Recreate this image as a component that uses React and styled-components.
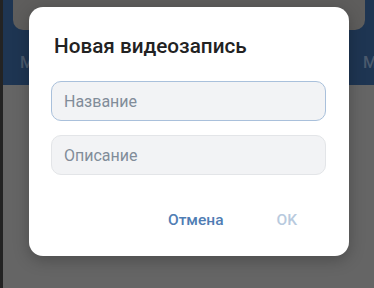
import React from "react";
import styled, { createGlobalStyle } from "styled-components";

const Global = createGlobalStyle`
  html, body { margin: 0; padding: 0; }
  body { width: 374px; height: 288px; overflow: hidden; background: #656565; font-family: Roboto, "Noto Sans", sans-serif; }
  #root { width: 374px; height: 288px; }
`;

const Page = styled.div`
  position: relative;
  width: 374px;
  height: 288px;
  display: flex;
  overflow: hidden;
  background: #656565;
`;

const EdgeStrip = styled.div`
  width: 3px;
  background: #232323;
`;

const Main = styled.div`
  flex: 1;
  display: flex;
  flex-direction: column;
`;

const Header = styled.div`
  height: 85px;
  background: #1e3552;
  display: flex;
  flex-direction: column;
  padding: 0 9px 0 10px;
  box-sizing: border-box;
`;

const SearchBox = styled.div`
  height: 30px;
  margin-top: -10px;
  padding-top: 10px;
  box-sizing: content-box;
  border-radius: 0 0 10px 10px;
  background: #5e5d5c;
`;

const Tabs = styled.div`
  display: flex;
  justify-content: space-between;
  padding: 23px 0 0 7px;
  margin-right: -12px;
`;

const Tab = styled.span`
  font-size: 16px;
  font-weight: 500;
  color: #4b5a6d;
`;

const Content = styled.div`
  flex: 1;
  background: #656565;
`;

const Dialog = styled.div`
  position: absolute;
  left: 29px;
  top: 7px;
  width: 320px;
  height: 249px;
  background: #fff;
  border-radius: 14px;
  box-shadow: 0 4px 16px rgba(0, 0, 0, 0.25);
  box-sizing: border-box;
  padding: 27px 23px 0 22px;
  display: flex;
  flex-direction: column;
`;

const Title = styled.h2`
  margin: 0 0 0 3px;
  font-size: 20.7px;
  line-height: 24px;
  font-weight: 500;
  color: #222;
`;

const Fields = styled.div`
  display: flex;
  flex-direction: column;
  gap: 14px;
  margin-top: 23px;
`;

const Field = styled.div`
  height: 40px;
  box-sizing: border-box;
  border-radius: 10px;
  background: #f2f3f5;
  border: 1px solid ${(p) => (p.$focused ? "#a9c0db" : "#e3e5e8")};
  display: flex;
  align-items: center;
  padding-left: 12px;
  font-size: 16px;
  color: #818c99;
`;

const Actions = styled.div`
  display: flex;
  justify-content: flex-end;
  gap: 53px;
  margin-top: 35px;
  padding-right: 29px;
`;

const Action = styled.span`
  font-size: 15.5px;
  font-weight: 500;
  line-height: 20px;
  color: ${(p) => (p.$disabled ? "#b8cade" : "#4f7db4")};
`;

export default function App() {
  return (
    <>
      <Global />
      <Page>
        <EdgeStrip />
        <Main>
          <Header>
            <SearchBox />
            <Tabs>
              <Tab>М</Tab>
              <Tab>М</Tab>
            </Tabs>
          </Header>
          <Content />
        </Main>
        <Dialog>
          <Title>Новая видеозапись</Title>
          <Fields>
            <Field $focused>Название</Field>
            <Field>Описание</Field>
          </Fields>
          <Actions>
            <Action>Отмена</Action>
            <Action $disabled>OK</Action>
          </Actions>
        </Dialog>
      </Page>
    </>
  );
}
